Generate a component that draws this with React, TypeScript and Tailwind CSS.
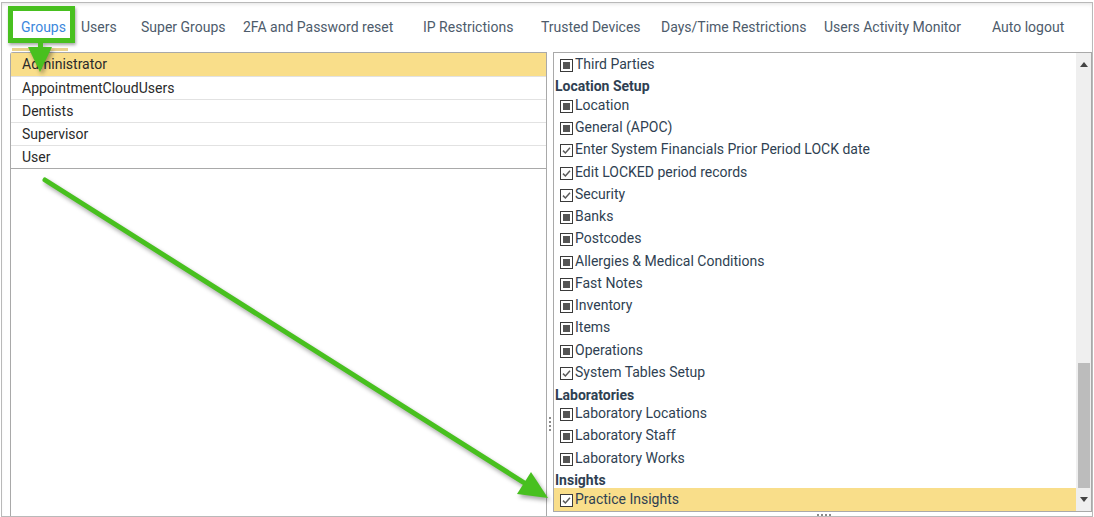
import React from "react";

const tabs: { label: string; w: string; active?: boolean }[] = [
  { label: "Groups", w: "w-[69px]", active: true },
  { label: "Users", w: "w-[60px]" },
  { label: "Super Groups", w: "w-[102px]" },
  { label: "2FA and Password reset", w: "w-[180px]" },
  { label: "IP Restrictions", w: "w-[118px]" },
  { label: "Trusted Devices", w: "w-[120px]" },
  { label: "Days/Time Restrictions", w: "w-[163px]" },
  { label: "Users Activity Monitor", w: "w-[168px]" },
  { label: "Auto logout", w: "w-[90px]" },
];

const groups = ["Administrator", "AppointmentCloudUsers", "Dentists", "Supervisor", "User"];

type Item = { kind: "h"; label: string } | { kind: "i"; label: string; state: "ind" | "chk"; sel?: boolean };

const items: Item[] = [
  { kind: "i", label: "Third Parties", state: "ind" },
  { kind: "h", label: "Location Setup" },
  { kind: "i", label: "Location", state: "ind" },
  { kind: "i", label: "General (APOC)", state: "ind" },
  { kind: "i", label: "Enter System Financials Prior Period LOCK date", state: "chk" },
  { kind: "i", label: "Edit LOCKED period records", state: "chk" },
  { kind: "i", label: "Security", state: "chk" },
  { kind: "i", label: "Banks", state: "ind" },
  { kind: "i", label: "Postcodes", state: "ind" },
  { kind: "i", label: "Allergies & Medical Conditions", state: "ind" },
  { kind: "i", label: "Fast Notes", state: "ind" },
  { kind: "i", label: "Inventory", state: "ind" },
  { kind: "i", label: "Items", state: "ind" },
  { kind: "i", label: "Operations", state: "ind" },
  { kind: "i", label: "System Tables Setup", state: "chk" },
  { kind: "h", label: "Laboratories" },
  { kind: "i", label: "Laboratory Locations", state: "ind" },
  { kind: "i", label: "Laboratory Staff", state: "ind" },
  { kind: "i", label: "Laboratory Works", state: "ind" },
  { kind: "h", label: "Insights" },
  { kind: "i", label: "Practice Insights", state: "chk", sel: true },
];

function Check({ state }: { state: "ind" | "chk" }) {
  return (
    <span className="mt-[2px] flex h-[13px] w-[13px] shrink-0 items-center justify-center border border-[#3a3a3a] bg-white">
      {state === "ind" ? (
        <span className="h-[7px] w-[7px] bg-[#555]" />
      ) : (
        <svg width="11" height="11" viewBox="0 0 11 11">
          <path d="M2 5.6 L4.4 8 L9 2.8" fill="none" stroke="#5a5a5a" strokeWidth="1.5" />
        </svg>
      )}
    </span>
  );
}

export default function App() {
  return (
    <div className="relative h-[517px] w-[1094px] overflow-hidden bg-white font-['Roboto',sans-serif] text-[14px]">
      <div className="h-[2px]" />
      <div className="ml-[1px] flex h-[515px] w-[1092px] flex-col border border-[#b9b9b9] shadow-[inset_0_3px_4px_-2px_rgba(0,0,0,0.12)]">
        {/* tabs */}
        <div className="flex h-[48px] shrink-0 items-center pl-[10px]">
          {tabs.map((t) => (
            <div key={t.label} className={`relative flex h-full items-center ${t.w} ${t.active ? "pl-[9px]" : ""}`}>
              <span className={`whitespace-nowrap ${t.active ? "text-[#3b87dc]" : "text-[#4d5b6b]"}`}>{t.label}</span>
              {t.active && <span className="absolute bottom-0 left-0 h-[3px] w-[56px] bg-[#ead28c]" />}
            </div>
          ))}
        </div>
        {/* content */}
        <div className="flex flex-1 pt-[1px]">
          <div className="ml-[8px] flex w-[537px] flex-col rounded-tl-[3px] border-l border-r border-t border-[#a9a9a9]">
            {groups.map((g, i) => (
              <div
                key={g}
                className={`flex items-center pl-[11px] text-[#2a2a2a] ${i === 0 ? "h-[24px] bg-[#f9de8a]" : "h-[23px]"} ${
                  i === groups.length - 1 ? "border-b border-[#a9a9a9]" : "border-b border-[#e2e2e2]"
                }`}
              >
                {g}
              </div>
            ))}
          </div>
          {/* splitter */}
          <div className="flex w-[6px] flex-col items-center pt-[365px]">
            <div className="flex flex-col gap-[2px]">
              <span className="h-[2px] w-[2px] bg-[#8a8a8a]" />
              <span className="h-[2px] w-[2px] bg-[#8a8a8a]" />
              <span className="h-[2px] w-[2px] bg-[#8a8a8a]" />
              <span className="h-[2px] w-[2px] bg-[#8a8a8a]" />
            </div>
          </div>
          <div className="flex w-[539px] flex-col">
            <div className="flex h-[460px] border border-[#a9a9a9]">
              <div className="flex flex-1 flex-col text-[#2f3f52]">
                {items.map((it, i) =>
                  it.kind === "h" ? (
                    <div key={i} className="h-[19px] pl-[1px] pt-[3px] font-bold leading-[16px]">
                      {it.label}
                    </div>
                  ) : (
                    <div key={i} className={`flex h-[22.25px] items-center gap-[2px] pl-[6px] ${it.sel ? "bg-[#f9de8a]" : ""}`}>
                      <Check state={it.state} />
                      <span className="whitespace-nowrap">{it.label}</span>
                    </div>
                  )
                )}
              </div>
              {/* scrollbar */}
              <div className="flex w-[15px] flex-col bg-[#efefef]">
                <div className="flex h-[22px] items-center justify-center">
                  <svg width="8" height="5" viewBox="0 0 8 5">
                    <path d="M0 5 L4 0 L8 5 Z" fill="#444" />
                  </svg>
                </div>
                <div className="h-[288px]" />
                <div className="ml-[2px] h-[125px] w-[12px] bg-[#bcbcbc]" />
                <div className="flex flex-1 items-center justify-center">
                  <svg width="8" height="5" viewBox="0 0 8 5">
                    <path d="M0 0 L8 0 L4 5 Z" fill="#444" />
                  </svg>
                </div>
              </div>
            </div>
            <div className="flex flex-1 items-start pl-[264px] pt-[2px]">
              <div className="flex gap-[2px]">
                <span className="h-[2px] w-[2px] bg-[#8a8a8a]" />
                <span className="h-[2px] w-[2px] bg-[#8a8a8a]" />
                <span className="h-[2px] w-[2px] bg-[#8a8a8a]" />
                <span className="h-[2px] w-[2px] bg-[#8a8a8a]" />
              </div>
            </div>
          </div>
        </div>
      </div>

      {/* annotations */}
      <div className="pointer-events-none absolute left-[8px] top-[6px] h-[37px] w-[67px] border-[5px] border-[#48c01f] shadow-[1px_2px_3px_rgba(0,0,0,0.35)]" />
      <svg
        className="pointer-events-none absolute left-0 top-0"
        width="1094"
        height="517"
        viewBox="0 0 1094 517"
        style={{ filter: "drop-shadow(2px 3px 2px rgba(0,0,0,0.35))" }}
      >
        <line x1="40.5" y1="43" x2="40.5" y2="52" stroke="#48c01f" strokeWidth="5" />
        <polygon points="28,47 52,47 40,72" fill="#48c01f" />
        <line x1="45" y1="180" x2="526" y2="484" stroke="#48c01f" strokeWidth="5" strokeLinecap="round" />
        <polygon points="531,472 548,498 517,494" fill="#48c01f" />
      </svg>
    </div>
  );
}
